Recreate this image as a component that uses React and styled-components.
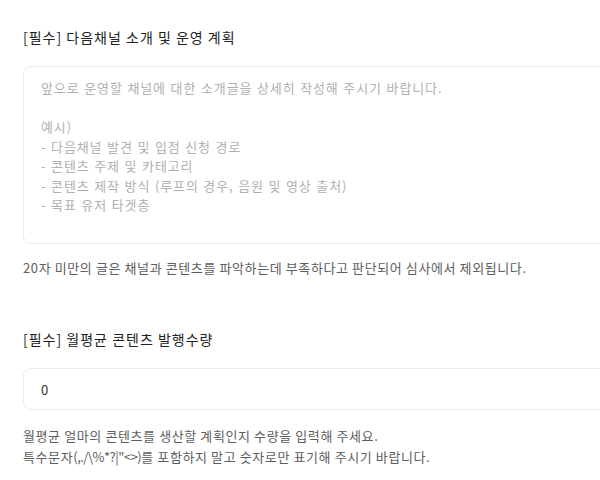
import React from "react";
import styled, { createGlobalStyle } from "styled-components";

const GlobalStyle = createGlobalStyle`
  html, body {
    margin: 0;
    padding: 0;
    background: #fff;
    overflow: hidden;
  }
  body {
    font-family: "Noto Sans CJK KR", "Noto Sans", sans-serif;
  }
`;

const placeholder = `앞으로 운영할 채널에 대한 소개글을 상세히 작성해 주시기 바랍니다.

예시)
- 다음채널 발견 및 입점 신청 경로
- 콘텐츠 주제 및 카테고리
- 콘텐츠 제작 방식 (루프의 경우, 음원 및 영상 출처)
- 목표 유저 타겟층`;

const App = () => {
  return (
    <Page>
      <GlobalStyle />
      <Field>
        <Label>[필수] 다음채널 소개 및 운영 계획</Label>
        <TextArea placeholder={placeholder} readOnly />
        <Help $top={13}>
          <p>20자 미만의 글은 채널과 콘텐츠를 파악하는데 부족하다고 판단되어 심사에서 제외됩니다.</p>
        </Help>
      </Field>
      <Field $gap>
        <Label>[필수] 월평균 콘텐츠 발행수량</Label>
        <Input value="0" readOnly />
        <Help $top={15}>
          <p>월평균 얼마의 콘텐츠를 생산할 계획인지 수량을 입력해 주세요.</p>
          <p>
            특수문자<Symbols>(,./\%*?|"&lt;&gt;)</Symbols>를 포함하지 말고 숫자로만 표기해 주시기 바랍니다.
          </p>
        </Help>
      </Field>
    </Page>
  );
};

const Page = styled.div`
  display: flex;
  flex-direction: column;
  width: 640px;
  padding: 26px 0 0 23px;
`;

const Field = styled.section`
  display: flex;
  flex-direction: column;
  margin-top: ${(p) => (p.$gap ? "50px" : "0")};
`;

const Label = styled.h3`
  margin: 0 0 18px;
  font-size: 14px;
  font-weight: 400;
  line-height: 22px;
  color: #222;
  letter-spacing: 1px;
`;

const TextArea = styled.textarea`
  box-sizing: border-box;
  width: 100%;
  height: 178px;
  padding: 11px 17px;
  border: 1px solid #ececec;
  border-radius: 8px;
  resize: none;
  outline: none;
  font-family: inherit;
  font-size: 13px;
  line-height: 19.5px;
  letter-spacing: 0.9px;
  word-spacing: 0.8px;
  color: #222;
  &::placeholder {
    color: #b0b0b0;
  }
`;

const Input = styled.input`
  box-sizing: border-box;
  width: 100%;
  height: 42px;
  padding: 0 17px;
  border: 1px solid #ececec;
  border-radius: 8px;
  outline: none;
  font-family: inherit;
  font-size: 13px;
  color: #333;
`;

const Help = styled.div`
  margin-top: ${(p) => p.$top}px;
  p {
    margin: 0;
    font-size: 13px;
    line-height: 21px;
    color: #5e5e5e;
    letter-spacing: 0.6px;
  }
`;

const Symbols = styled.span`
  letter-spacing: -0.5px;
`;

export default App;
